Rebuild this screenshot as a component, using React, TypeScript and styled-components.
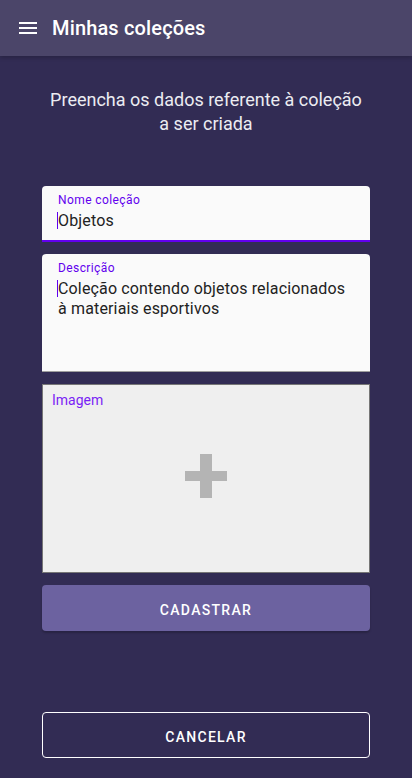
import React from "react";
import styled, { createGlobalStyle } from "styled-components";

const Global = createGlobalStyle`
  html, body { margin: 0; padding: 0; background: #322c54; }
  body { font-family: Roboto, "Noto Sans", Arial, sans-serif; -webkit-font-smoothing: antialiased; }
  * { box-sizing: border-box; }
`;

const Page = styled.div`
  min-height: 100vh;
  display: flex;
  flex-direction: column;
  background: #322c54;
`;

const AppBar = styled.header`
  height: 56px;
  flex: none;
  display: flex;
  align-items: center;
  padding: 0 16px;
  gap: 12px;
  background: #4b4569;
  box-shadow: 0 2px 4px rgba(0, 0, 0, 0.2);
  position: relative;
  z-index: 1;
`;

const MenuIcon = styled.svg`
  width: 24px;
  height: 24px;
  fill: #ffffff;
  flex: none;
`;

const Title = styled.h1`
  margin: 0;
  font-size: 20px;
  font-weight: 500;
  color: #ffffff;
  letter-spacing: 0.15px;
`;

const Main = styled.main`
  flex: 1;
  display: flex;
  flex-direction: column;
  padding: 32px 42px 20px;
`;

const Subtitle = styled.p`
  margin: 0 0 50px;
  text-align: center;
  font-size: 18px;
  line-height: 24px;
  color: #ececf2;
  padding: 0 8px;
`;

const Field = styled.div<{ $h: number; $focused?: boolean }>`
  height: ${(p) => p.$h}px;
  background: #fafafa;
  border-radius: 4px 4px 0 0;
  border-bottom: ${(p) => (p.$focused ? "2px solid #6200ee" : "1px solid #9e9e9e")};
  padding: 7px 16px 0;
  margin-bottom: 12px;
`;

const Label = styled.div`
  font-size: 12px;
  line-height: 14px;
  color: #6200ee;
  letter-spacing: 0.4px;
`;

const Value = styled.div`
  font-size: 16px;
  line-height: 20px;
  color: #222222;
  margin-top: 4px;
  letter-spacing: 0.15px;
`;

const Caret = styled.span`
  display: inline-block;
  width: 1px;
  height: 17px;
  background: #6200ee;
  vertical-align: -3px;
  margin-left: -1px;
`;

const ImageBox = styled.div`
  height: 189px;
  background: #efefef;
  border: 1px solid #767676;
  margin-bottom: 12px;
  display: flex;
  flex-direction: column;
  padding: 6px 9px;
`;

const ImageLabel = styled.div`
  font-size: 14px;
  line-height: 18px;
  color: #7a1ff5;
`;

const PlusWrap = styled.div`
  flex: 1;
  display: flex;
  align-items: center;
  justify-content: center;
  padding-bottom: 24px;
`;

const Button = styled.button<{ $outline?: boolean }>`
  height: 46px;
  width: 100%;
  border-radius: 4px;
  border: ${(p) => (p.$outline ? "1px solid #ffffff" : "none")};
  background: ${(p) => (p.$outline ? "transparent" : "#6c62a0")};
  color: #ffffff;
  font-family: Roboto, "Noto Sans", Arial, sans-serif;
  font-size: 14px;
  font-weight: 500;
  letter-spacing: 1.3px;
  text-transform: uppercase;
  padding: 4px 0 0;
  margin-top: ${(p) => (p.$outline ? "auto" : "0")};
  box-shadow: ${(p) => (p.$outline ? "none" : "0 2px 2px rgba(0,0,0,0.2)")};
`;

export default function App() {
  return (
    <>
      <Global />
      <Page>
        <AppBar>
          <MenuIcon viewBox="0 0 24 24">
            <path d="M3 18h18v-2H3v2zm0-5h18v-2H3v2zm0-7v2h18V6H3z" />
          </MenuIcon>
          <Title>Minhas coleções</Title>
        </AppBar>
        <Main>
          <Subtitle>Preencha os dados referente à coleção a ser criada</Subtitle>
          <Field $h={56} $focused>
            <Label>Nome coleção</Label>
            <Value>
              <Caret />
              Objetos
            </Value>
          </Field>
          <Field $h={118}>
            <Label>Descrição</Label>
            <Value>
              <Caret />
              Coleção contendo objetos relacionados à materiais esportivos
            </Value>
          </Field>
          <ImageBox>
            <ImageLabel>Imagem</ImageLabel>
            <PlusWrap>
              <svg width="42" height="44" viewBox="0 0 42 44">
                <rect x="15" y="0" width="12" height="44" fill="#b4b4b4" />
                <rect x="0" y="17" width="42" height="10" fill="#b4b4b4" />
              </svg>
            </PlusWrap>
          </ImageBox>
          <Button>Cadastrar</Button>
          <Button $outline>Cancelar</Button>
        </Main>
      </Page>
    </>
  );
}
